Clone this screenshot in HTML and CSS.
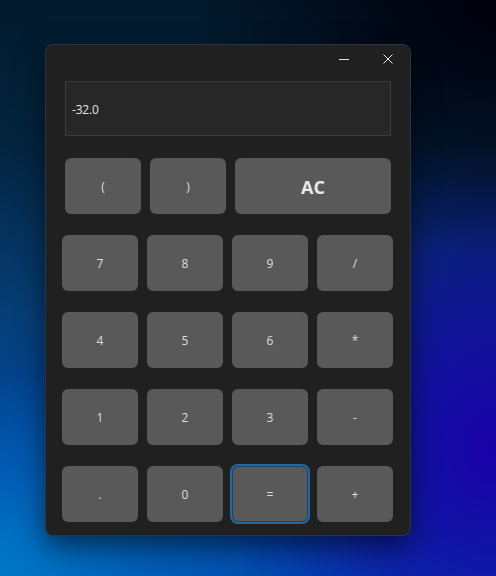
FILE: index.html
```html
<!DOCTYPE html>
<html lang="en">
<head>
<meta charset="utf-8">
<title>Calculator</title>
<link rel="stylesheet" href="styles.css">
</head>
<body>
<div class="desktop">
  <div class="window">
    <div class="titlebar">
      <button class="cap-btn" aria-label="Minimize">
        <svg width="10" height="10" viewBox="0 0 10 10"><path d="M0 5.5H10" stroke="#e8e8e8" stroke-width="1"/></svg>
      </button>
      <button class="cap-btn" aria-label="Close">
        <svg width="10" height="10" viewBox="0 0 10 10"><path d="M0.5 0.5L9.5 9.5M9.5 0.5L0.5 9.5" stroke="#e8e8e8" stroke-width="1"/></svg>
      </button>
    </div>
    <div class="display">-32.0</div>
    <div class="keys">
      <div class="row row-top">
        <button class="key">(</button>
        <button class="key">)</button>
        <button class="key key-ac">AC</button>
      </div>
      <div class="row">
        <button class="key">7</button>
        <button class="key">8</button>
        <button class="key">9</button>
        <button class="key">/</button>
      </div>
      <div class="row">
        <button class="key">4</button>
        <button class="key">5</button>
        <button class="key">6</button>
        <button class="key">*</button>
      </div>
      <div class="row">
        <button class="key">1</button>
        <button class="key">2</button>
        <button class="key">3</button>
        <button class="key">-</button>
      </div>
      <div class="row">
        <button class="key">.</button>
        <button class="key">0</button>
        <button class="key key-focus">=</button>
        <button class="key">+</button>
      </div>
    </div>
  </div>
</div>
</body>
</html>
```

FILE: styles.css
```css
html, body {
  margin: 0;
  padding: 0;
  height: 100%;
}

body {
  font-family: "Open Sans", "Noto Sans", sans-serif;
  overflow: hidden;
}

.desktop {
  width: 496px;
  height: 576px;
  box-sizing: border-box;
  padding: 44px 0 0 45px;
  background:
    radial-gradient(ellipse 60% 45% at 100% 0%, #00000c 0%, rgba(0,0,12,0.6) 50%, rgba(0,0,12,0) 100%),
    radial-gradient(ellipse 55% 55% at 100% 78%, #1a00a8 0%, rgba(20,0,160,0.6) 50%, rgba(20,0,160,0) 100%),
    radial-gradient(ellipse 50% 35% at 0% 100%, #0078c8 0%, rgba(0,110,190,0.5) 55%, rgba(0,100,180,0) 100%),
    linear-gradient(180deg, #021a2c 0%, #03243f 25%, #063f78 55%, #0046a4 80%, #0050b0 100%);
}

.window {
  width: 366px;
  height: 492px;
  box-sizing: border-box;
  background: #202020;
  border: 1px solid #2b3444;
  border-radius: 8px;
  box-shadow: 0 10px 28px rgba(0, 0, 0, 0.55);
  display: flex;
  flex-direction: column;
}

.titlebar {
  height: 28px;
  display: flex;
  justify-content: flex-end;
}

.cap-btn {
  width: 44px;
  height: 28px;
  padding: 0;
  border: none;
  background: transparent;
  display: flex;
  align-items: center;
  justify-content: center;
}

.cap-btn svg {
  display: block;
}

.display {
  margin: 8px 19px 0 19px;
  height: 55px;
  box-sizing: border-box;
  background: #272727;
  border: 1px solid #3c3c3c;
  padding: 2px 0 0 6px;
  display: flex;
  align-items: center;
  color: #e4e4e4;
  font-size: 12px;
  letter-spacing: -0.2px;
}

.keys {
  margin-top: 22px;
  padding: 0 16px;
  display: flex;
  flex-direction: column;
  gap: 21px;
}

.row {
  display: grid;
  grid-template-columns: repeat(4, 76px);
  column-gap: 9px;
}

.row-top {
  padding: 0 3px;
  grid-template-columns: 76px 76px 156px;
}

.key {
  height: 56px;
  padding: 0;
  border: none;
  border-radius: 6px;
  background: #595959;
  color: #dedede;
  font-family: "Open Sans", "Noto Sans", sans-serif;
  font-size: 12px;
  display: flex;
  align-items: center;
  justify-content: center;
}

.key-ac {
  font-size: 18px;
  font-weight: 700;
  color: #e8e8e8;
  padding-top: 2px;
}

.key-focus {
  box-shadow: 0 0 0 2px #2468a2, inset 0 0 0 1px #1b4466;
}
```
